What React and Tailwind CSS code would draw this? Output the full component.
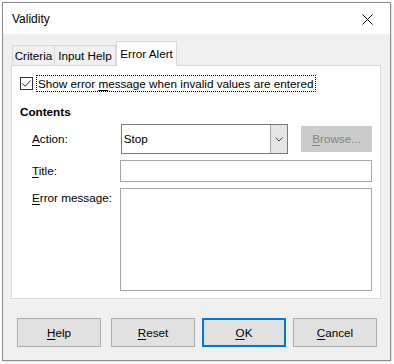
const U = ({ children }) => <span className="underline underline-offset-2">{children}</span>;

const Button = ({ children, primary, className = '' }) => (
  <button
    className={`h-[29px] w-[84px] bg-[#e1e1e1] text-[11.7px] text-black ${
      primary ? 'border-2 border-[#0078d7]' : 'border border-[#adadad]'
    } ${className}`}
  >
    <span>{children}</span>
  </button>
);

const App = () => {
  return (
    <div className="w-[394px] h-[364px] bg-white pt-[2px] pl-[2px] font-['Liberation_Sans',Arial,sans-serif] text-[11.7px] text-black">
      <div className="w-[389px] h-[359px] border border-[#8a8a8a] bg-[#f0f0f0] flex flex-col shadow-[1px_1px_2px_rgba(0,0,0,0.15)]">
        {/* title bar */}
        <div className="h-[31px] bg-white flex items-center justify-between pl-[9px] pr-[17px]">
          <span className="text-[12px] mt-[1px]">Validity</span>
          <svg width="11" height="11" viewBox="0 0 11 11" className="mt-[1px]">
            <path d="M0.5 0.5 L10.5 10.5 M10.5 0.5 L0.5 10.5" stroke="#000" strokeWidth="1" />
          </svg>
        </div>

        <div className="flex flex-col pt-[7px] px-[8px]">
          {/* tabs */}
          <div className="flex items-end h-[24px] pl-[1px]">
            <div className="h-[20px] w-[43px] border border-b-0 border-[#d9d9d9] bg-[#f0f0f0] flex items-center justify-center whitespace-nowrap">
              Criteria
            </div>
            <div className="h-[20px] w-[61px] border border-b-0 border-l-0 border-[#d9d9d9] bg-[#f0f0f0] flex items-center justify-center whitespace-nowrap">
              Input Help
            </div>
            <div className="relative z-10 -mb-[1px] h-[25px] w-[61px] border border-b-0 border-[#d9d9d9] bg-white flex items-center justify-center pb-[1px] whitespace-nowrap">
              Error Alert
            </div>
          </div>

          {/* panel */}
          <div className="h-[234px] w-[370px] border border-[#d9d9d9] bg-white flex flex-col pt-[9px] px-[8px]">
            <div className="flex items-center h-[17px]">
              <div className="w-[13px] h-[13px] border border-[#333] flex items-center justify-center">
                <svg width="11" height="11" viewBox="0 0 11 11">
                  <path d="M1.5 5.5 L4.2 8.3 L9.5 2.5" stroke="#333" strokeWidth="1" fill="none" />
                </svg>
              </div>
              <div className="ml-[3px] h-[17px] px-[1px] border border-dotted border-black flex items-center">
                <span>
                  Show error <U>m</U>essage when invalid values are entered
                </span>
              </div>
            </div>

            <div className="mt-[12px] font-bold h-[15px] leading-[15px]">Contents</div>

            <div className="mt-[5px] flex flex-col gap-[6px] pl-[12px]">
              <div className="flex items-center">
                <div className="w-[89px]">
                  <U>A</U>ction:
                </div>
                <div className="w-[168px] h-[30px] border border-[#7a7a7a] flex">
                  <div className="flex-1 flex items-center pl-[2px]">Stop</div>
                  <div className="w-[17px] bg-[#e5e5e5] border-l border-[#adadad] flex items-center justify-center">
                    <svg width="8" height="5" viewBox="0 0 8 5">
                      <path d="M0.5 0.5 L4 4 L7.5 0.5" stroke="#444" strokeWidth="1" fill="none" />
                    </svg>
                  </div>
                </div>
                <div className="ml-[13px] w-[71px] h-[26px] bg-[#cccccc] border border-[#cccccc] flex items-center justify-center text-[#838383]">
                  <span>
                    <U>B</U>rowse...
                  </span>
                </div>
              </div>

              <div className="flex items-center">
                <div className="w-[89px]">
                  <U>T</U>itle:
                </div>
                <div className="w-[253px] h-[22px] border border-[#a6a6a6] bg-white" />
              </div>

              <div className="flex items-start">
                <div className="w-[89px] pt-[1px]">
                  <U>E</U>rror message:
                </div>
                <div className="w-[253px] h-[103px] border border-[#a6a6a6] bg-white" />
              </div>
            </div>
          </div>
        </div>

        {/* buttons */}
        <div className="flex mt-[19px] pl-[14px]">
          <Button>
            <U>H</U>elp
          </Button>
          <Button className="ml-[10px]">
            <U>R</U>eset
          </Button>
          <Button primary className="ml-[7px]">
            <U>O</U>K
          </Button>
          <Button className="ml-[7px]">
            <U>C</U>ancel
          </Button>
        </div>
      </div>
    </div>
  );
};

export default App;
